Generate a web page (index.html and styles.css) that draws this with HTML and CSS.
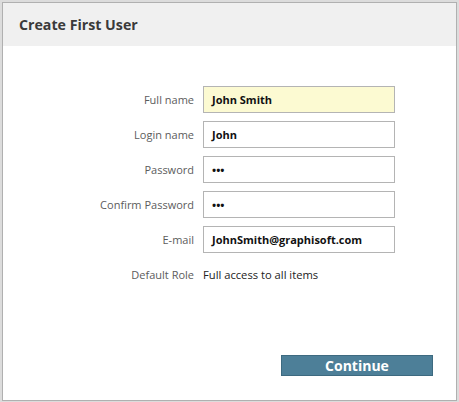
FILE: index.html
```html
<!DOCTYPE html>
<html>
<head>
<meta charset="utf-8">
<link rel="stylesheet" href="styles.css">
</head>
<body>
<div class="dialog">
  <div class="header"><h1 class="title">Create First User</h1></div>
  <div class="content">
    <div class="form">
      <label class="label">Full name</label>
      <div class="input input-active">John Smith</div>
      <label class="label">Login name</label>
      <div class="input">John</div>
      <label class="label">Password</label>
      <div class="input dots">&bull;&bull;&bull;</div>
      <label class="label">Confirm Password</label>
      <div class="input dots">&bull;&bull;&bull;</div>
      <label class="label">E-mail</label>
      <div class="input">JohnSmith@graphisoft.com</div>
      <label class="label">Default Role</label>
      <div class="value">Full access to all items</div>
    </div>
    <div class="footer">
      <button class="btn">Continue</button>
    </div>
  </div>
</div>
</body>
</html>
```
FILE: styles.css
```css
html, body {
  margin: 0;
  padding: 0;
}
body {
  background: #dcdcdc;
  width: 459px;
  height: 402px;
  padding: 2px 2px 1px 2px;
  box-sizing: border-box;
  font-family: "Open Sans", "Liberation Sans", sans-serif;
}
.dialog {
  height: 399px;
  border: 1px solid #b0b0b0;
  background: #fff;
  box-sizing: border-box;
  display: flex;
  flex-direction: column;
}
.header {
  height: 43px;
  background: #f0f0f0;
  display: flex;
  align-items: center;
  padding-left: 16px;
}
.title {
  margin: 0;
  font-size: 14.2px;
  font-weight: 700;
  color: #3a3a3a;
}
.content {
  padding-top: 40px;
}
.form {
  display: grid;
  grid-template-columns: 191px 192px;
  grid-auto-rows: 27px;
  column-gap: 9px;
  row-gap: 8px;
  align-items: center;
}
.label {
  text-align: right;
  font-size: 11px;
  color: #5c5c5c;
}
.input {
  height: 27px;
  box-sizing: border-box;
  border: 1px solid #b4b4b4;
  background: #fff;
  padding-left: 8px;
  display: flex;
  align-items: center;
  font-size: 11px;
  font-weight: 700;
  color: #111;
}
.input-active {
  background: #fcfad2;
}
.dots {
  font-size: 11px;
  letter-spacing: 0;
}
.value {
  font-size: 11.2px;
  color: #222;
}
.footer {
  display: flex;
  justify-content: flex-end;
  padding-right: 23px;
  margin-top: 67px;
}
.btn {
  width: 152px;
  height: 21px;
  margin: 0;
  padding: 0;
  background: #4d7f98;
  border: 1px solid #3d6a80;
  color: #fff;
  font-family: "Open Sans", "Liberation Sans", sans-serif;
  font-size: 14px;
  font-weight: 700;
  line-height: 18px;
}
```
